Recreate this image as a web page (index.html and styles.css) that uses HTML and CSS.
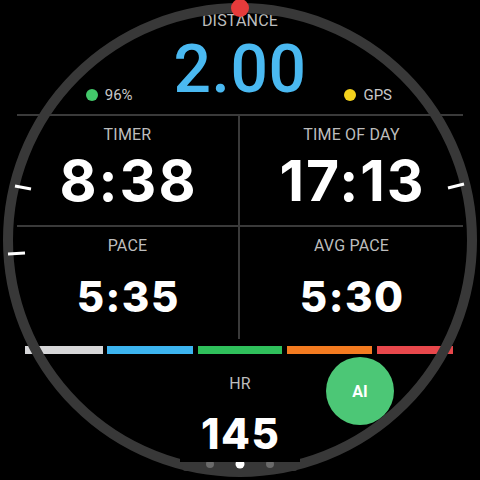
FILE: index.html
```html
<!DOCTYPE html>
<html>
<head>
<meta charset="utf-8">
<link rel="stylesheet" href="styles.css">
</head>
<body>
<div class="face">
  <section class="top">
    <div class="label">DISTANCE</div>
    <div class="top-row">
      <div class="status"><span class="dot dot-green"></span><span>96%</span></div>
      <div class="distance">2.00</div>
      <div class="status"><span class="dot dot-yellow"></span><span>GPS</span></div>
    </div>
  </section>
  <section class="grid">
    <div class="cell cell-a">
      <div class="label">TIMER</div>
      <div class="big">8:38</div>
    </div>
    <div class="cell cell-b">
      <div class="label">TIME OF DAY</div>
      <div class="big">17:13</div>
    </div>
    <div class="cell cell-c">
      <div class="label">PACE</div>
      <div class="mid">5:35</div>
    </div>
    <div class="cell cell-d">
      <div class="label">AVG PACE</div>
      <div class="mid">5:30</div>
    </div>
  </section>
  <div class="zones">
    <span class="zone z1"></span>
    <span class="zone z2"></span>
    <span class="zone z3"></span>
    <span class="zone z4"></span>
    <span class="zone z5"></span>
  </div>
  <section class="hr">
    <div class="label">HR</div>
    <div class="mid">145</div>
  </section>

  <svg class="bezel" width="480" height="480" viewBox="0 0 480 480">
    <circle cx="240" cy="240" r="232" fill="none" stroke="#383838" stroke-width="10"/>
    <line x1="15" y1="186" x2="31" y2="189" stroke="#fff" stroke-width="3"/>
    <line x1="8" y1="254" x2="25" y2="253" stroke="#fff" stroke-width="3"/>
    <line x1="448" y1="188" x2="464" y2="184" stroke="#fff" stroke-width="3"/>
    <circle cx="240" cy="8" r="9" fill="#e53b3b"/>
    <rect x="182" y="455" width="116" height="16" rx="4" fill="#383838"/>
    <circle cx="210" cy="464" r="4" fill="#6a6a6a"/>
    <circle cx="240" cy="464" r="4.5" fill="#fff"/>
    <circle cx="270" cy="464" r="4" fill="#6a6a6a"/>
    <rect x="180" y="452" width="120" height="10" fill="#000"/>
  </svg>

  <button class="ai">AI</button>
</div>
</body>
</html>
```
FILE: styles.css
```css
* { box-sizing: border-box; }
html, body { margin: 0; padding: 0; background: #000; }
body { width: 480px; height: 480px; overflow: hidden; font-family: Roboto, "Noto Sans", sans-serif; }

.face {
  position: relative;
  width: 480px;
  height: 480px;
  background: #000;
  display: flex;
  flex-direction: column;
  color: #fff;
}

.label {
  font-size: 16px;
  line-height: 16px;
  height: 16px;
  color: #bdbdbd;
  text-align: center;
  letter-spacing: 0.2px;
}

.top {
  height: 116px;
  padding-top: 13px;
  margin: 0 17px;
  border-bottom: 2px solid #3a3a3a;
}
.top-row {
  margin-top: 9.5px;
  display: grid;
  grid-template-columns: 1fr auto 1fr;
  column-gap: 40px;
  align-items: end;
}
.top-row .status:first-child { justify-self: end; margin-right: 1px; }
.top-row .status:last-child { justify-self: start; margin-left: -2px; }

.distance {
  font-size: 66px;
  line-height: 62px;
  height: 62px;
  font-weight: 500;
  color: #4ab9f1;
  letter-spacing: 0.5px;
}
.status {
  display: flex;
  align-items: center;
  gap: 7px;
  font-size: 15px;
  line-height: 14px;
  color: #c8c8c8;
  margin-bottom: -1.5px;
}
.dot { width: 12px; height: 12px; border-radius: 50%; display: inline-block; }
.dot-green { background: #43c86a; }
.dot-yellow { background: #f4d21c; }

.grid {
  margin: 0 17px;
  display: grid;
  grid-template-columns: 1fr 1fr;
  grid-template-rows: 111px 112px;
}
.cell { padding-top: 11px; }
.cell-a, .cell-b { border-bottom: 2px solid #3a3a3a; }
.cell-a, .cell-c { border-right: 2px solid #3a3a3a; }

.big {
  margin-top: 9px;
  padding-left: 2px;
  font-family: Inter, Roboto, sans-serif;
  font-size: 57px;
  line-height: 57px;
  font-weight: 700;
  text-align: center;
  letter-spacing: 2px;
}
.mid {
  padding-left: 1.5px;
  font-family: Inter, Roboto, sans-serif;
  font-size: 42px;
  line-height: 42px;
  font-weight: 800;
  text-align: center;
  letter-spacing: 1.5px;
}
.cell .mid { margin-top: 22px; }

.zones {
  margin-top: 7px;
  height: 8px;
  padding-left: 25px;
  display: flex;
  gap: 4px;
}
.zone { height: 8px; display: block; }
.z1 { width: 78px; background: #d6d6d8; }
.z2 { width: 86px; background: #3cb4f0; margin-right: 1px; }
.z3 { width: 84px; background: #2fbf5b; margin-right: 1px; }
.z4 { width: 85px; background: #f47b20; margin-right: 1px; }
.z5 { width: 76px; background: #e8474b; }

.hr { padding-top: 22px; }
.hr .mid { margin-top: 21px; }

.bezel { position: absolute; left: 0; top: 0; pointer-events: none; }

.ai {
  position: absolute;
  left: 326px;
  top: 357px;
  width: 68px;
  height: 68px;
  border-radius: 50%;
  border: none;
  background: #4cc776;
  color: #fff;
  font-family: Roboto, sans-serif;
  font-size: 16px;
  font-weight: 700;
  padding: 0;
}
```
